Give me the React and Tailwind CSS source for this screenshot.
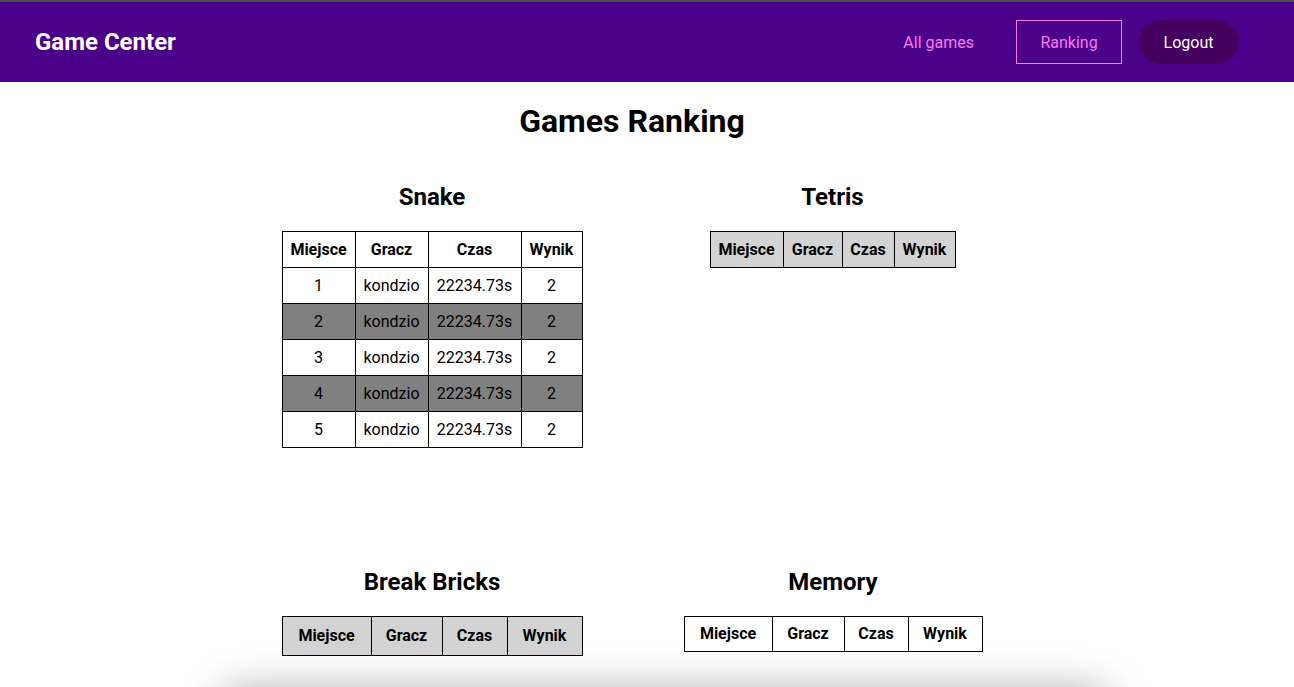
import React from 'react';

const rows = [1, 2, 3, 4, 5].map((n) => ({ place: n, player: 'kondzio', time: '22234.73s', score: 2 }));

function RankTable({ cols, headH, headBg, rowH, data = [] }) {
    const width = cols.reduce((a, b) => a + b, 0);
    return (
        <table className="border-collapse table-fixed mx-auto" style={{ width }}>
            <colgroup>
                {cols.map((w, i) => (
                    <col key={i} style={{ width: w }} />
                ))}
            </colgroup>
            <thead>
                <tr className={headBg}>
                    {['Miejsce', 'Gracz', 'Czas', 'Wynik'].map((h) => (
                        <th key={h} className="border border-black text-[16px] font-bold p-0" style={{ height: headH }}>
                            {h}
                        </th>
                    ))}
                </tr>
            </thead>
            <tbody>
                {data.map((r, i) => (
                    <tr key={r.place} className={i % 2 === 1 ? 'bg-[#808080]' : 'bg-white'}>
                        <td className="border border-black text-center text-[16px] p-0" style={{ height: rowH }}>{r.place}</td>
                        <td className="border border-black text-center text-[16px] p-0">{r.player}</td>
                        <td className="border border-black text-center text-[16px] p-0">{r.time}</td>
                        <td className="border border-black text-center text-[16px] p-0">{r.score}</td>
                    </tr>
                ))}
            </tbody>
        </table>
    );
}

function GameBlock({ title, children, className = '' }) {
    return (
        <div className={className}>
            <h2 className="text-[24px] leading-[28px] font-bold text-center mb-[20px]">{title}</h2>
            {children}
        </div>
    );
}

export default function App() {
    return (
        <div className="h-[687px] bg-white text-black overflow-hidden" style={{ fontFamily: 'Roboto, "Liberation Sans", sans-serif' }}>
            <div className="h-[2px] bg-[#4d4d4d]" />
            <nav className="h-[80px] bg-[#4b008a] flex items-center pl-[35px] pr-[56px]">
                <div className="text-white font-bold text-[24px]">Game Center</div>
                <div className="ml-auto flex items-center">
                    <a className="text-[#f97bf0] text-[16px] px-[24px] h-[44px] pt-[2px] flex items-center border border-transparent">All games</a>
                    <a className="ml-[17px] text-[#f97bf0] text-[16px] w-[106px] h-[44px] pt-[2px] flex items-center justify-center border border-[#f97bf0]">Ranking</a>
                    <button className="ml-[17px] bg-[#43005f] text-white text-[16px] w-[99px] h-[44px] pt-[2px] rounded-full">Logout</button>
                </div>
            </nav>

            <div className="w-[1264px]">
                <h1 className="text-[32px] leading-[37px] font-bold text-center mt-[21px]">Games Ranking</h1>

                <div className="w-[800px] mx-auto mt-[43px] grid grid-cols-2">
                    <GameBlock title="Snake" className="h-[385px]">
                        <RankTable cols={[73, 73, 93, 61]} headH={36} rowH={36} headBg="bg-white" data={rows} />
                    </GameBlock>
                    <GameBlock title="Tetris" className="h-[385px] pl-[1px]">
                        <RankTable cols={[73, 59, 52, 61]} headH={36} headBg="bg-[#d3d3d3]" />
                    </GameBlock>
                    <GameBlock title="Break Bricks">
                        <RankTable cols={[89, 71, 65, 75]} headH={39} headBg="bg-[#d3d3d3]" />
                    </GameBlock>
                    <GameBlock title="Memory" className="pl-[2px]">
                        <RankTable cols={[88, 72, 64, 74]} headH={35} headBg="bg-white" />
                    </GameBlock>
                </div>

                <div className="ml-[225px] w-[880px] h-[200px] mt-[38px] bg-white shadow-[0_0_40px_rgba(0,0,0,0.4)]" />
            </div>
        </div>
    );
}
